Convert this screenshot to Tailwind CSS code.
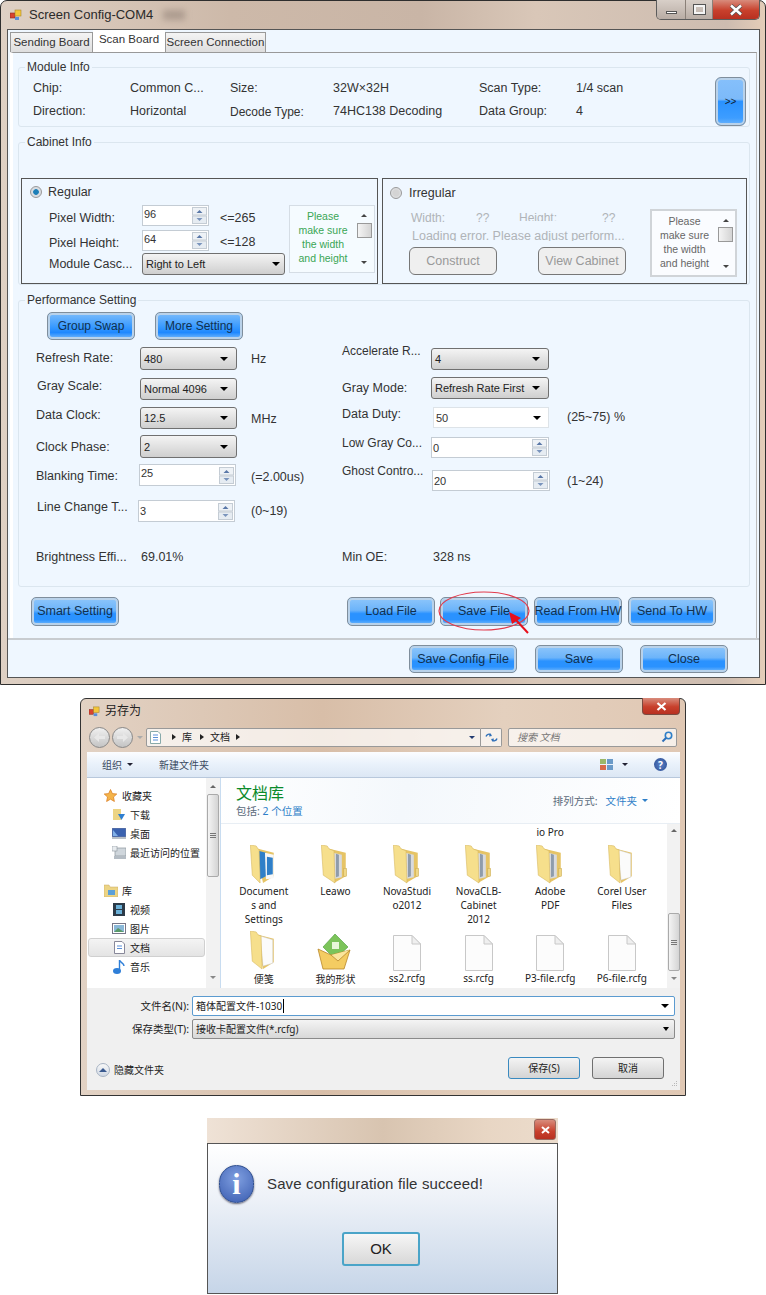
<!DOCTYPE html>
<html>
<head>
<meta charset="utf-8">
<title>Screen Config</title>
<script src="https://cdn.jsdelivr.net/npm/@tailwindcss/browser@4"></script>
</head>
<body class="bg-white">
<svg class="hidden">
  <symbol id="appicon" viewBox="0 0 12 12"><rect x="0" y="4" width="5" height="5" fill="#d9432f" stroke="#8a2a20" stroke-width=".6"/><rect x="5" y="1" width="6" height="6" fill="#f4c63a" stroke="#a8862a" stroke-width=".6"/><rect x="5" y="8" width="4" height="3" fill="#5b8fd8"/></symbol>
  <symbol id="folder" viewBox="0 0 28 40"><path d="M5 3 L25 8 V32 L13 39Z" fill="#e6c466"/><path d="M12 8 L21 10 V33 L12 35Z" fill="#d8dade"/><path d="M15 9 L18 10 V32 L15 33Z" fill="#8f9cab"/><path d="M0 0 L6 1 L8 4 L13 6 L14 39 L2 31Z" fill="#f6df8c" stroke="#d8b860" stroke-width=".6"/><rect x="23" y="24" width="3" height="8" fill="#f0d888" stroke="#c8a850" stroke-width=".5"/></symbol>
  <symbol id="paperfolder" viewBox="0 0 28 40"><path d="M5 3 L24 8 V32 L13 39Z" fill="#e6c466"/><path d="M10 5 L23 9 V33 L13 36Z" fill="#fbfbfb" stroke="#ccc" stroke-width=".5"/><path d="M0 0 L6 1 L8 4 L11 5 L12 39 L2 31Z" fill="#f6df8c" stroke="#d8b860" stroke-width=".6"/></symbol>
  <symbol id="docfile" viewBox="0 0 28 36"><path d="M.5 .5 H19 L27.5 9 V35.5 H.5Z" fill="#fcfcfc" stroke="#c8c8c8"/><path d="M19 .5 V9 H27.5Z" fill="#efefef" stroke="#c8c8c8"/></symbol>
  <symbol id="spinbtn" viewBox="0 0 15 17"><rect x=".5" y=".5" width="14" height="7.5" fill="#eef2f6" stroke="#c4ccd4"/><rect x=".5" y="9" width="14" height="7.5" fill="#e6ecf2" stroke="#c4ccd4"/><path d="M4.5 6 L7.5 3 L10.5 6Z" fill="#5a78a8"/><path d="M4.5 11 L7.5 14 L10.5 11Z" fill="#7a94bc"/></symbol>
</svg>

<div class="w-[766px] h-[1295px] overflow-hidden relative font-['Liberation_Sans',sans-serif] text-[12px] text-[#222]">

  <!-- config window -->
  <div class="w-[766px] h-[685px] border border-[#2e2e2e] rounded-t-[7px] px-[6px] bg-[linear-gradient(90deg,#ded0c4,#cdb9a9_30%,#c9b5a6_55%,#d9c7b8_70%,#cdbcb0_95%,#e4cdb8)]">
    <div class="h-[28px] flex items-start">
      <svg class="w-[12px] h-[12px] mt-[8px] ml-[3px]"><use href="#appicon"/></svg>
      <span class="ml-[7px] mt-[6px] text-[13px] leading-[16px] text-[#2a2a2a]">Screen Config-COM4</span>
      <span class="ml-[10px] mt-[9px] w-[22px] h-[10px] bg-[#8a7a70]/50 blur-[3px]"></span>
      <div class="ml-auto -mr-px -mt-px w-[104px] h-[20px] flex border border-t-0 border-[#5c5c5c] rounded-b-[5px] overflow-hidden">
        <div class="w-[29px] flex items-center justify-center bg-[linear-gradient(#d8cfc8,#b8aca4)] border-r border-[#8a8078]"><span class="w-[11px] h-[3px] mt-[6px] bg-white border border-[#555]"></span></div>
        <div class="w-[27px] flex items-center justify-center bg-[linear-gradient(#d8cfc8,#b8aca4)] border-r border-[#8a8078]"><span class="w-[11px] h-[9px] border-2 border-[#f4f4f4] outline outline-[#555]"></span></div>
        <div class="flex-1 flex items-center justify-center bg-[linear-gradient(#d88c7c,#c8402c_55%,#b83020)]"><svg class="w-[14px] h-[12px]" viewBox="0 0 14 12"><path d="M2 1.5 L12 10.5 M12 1.5 L2 10.5" stroke="#555" stroke-width="4"/><path d="M2 1.5 L12 10.5 M12 1.5 L2 10.5" stroke="#fff" stroke-width="2.4"/></svg></div>
      </div>
    </div>

    <div class="w-[753px] h-[649px] border border-[#555] bg-[#eff7ff]">
      <!-- tabs -->
      <div class="h-[22px] pt-px pl-[2px] flex items-end">
        <div class="w-[83px] h-[20px] flex items-center justify-center border border-b-0 border-[#999] bg-[linear-gradient(#f4f4f4,#dedede)] text-[#333] text-[11.5px]">Sending Board</div>
        <div class="w-[72px] h-[22px] flex items-center justify-center bg-white text-[#333] text-[11.5px] pb-[2px]">Scan Board</div>
        <div class="w-[101px] h-[20px] flex items-center justify-center border border-b-0 border-[#999] bg-[linear-gradient(#f4f4f4,#dedede)] text-[#333] text-[11.5px]">Screen Connection</div>
      </div>

      <div class="ml-[2px] w-[747px] h-[586px] border-t border-r border-l-[3px] border-t-[#999] border-r-[#bbb] border-l-white pl-[5px] pt-[7px]">
        <!-- module info -->
        <fieldset class="w-[732px] h-[67px] border border-[#dbe6ef] rounded-[3px] pl-[14px]">
          <legend class="-ml-[8px] px-[2px] h-[14px] leading-[14px] text-[#333]">Module Info</legend>
          <div class="flex pt-[3px]">
            <div class="w-[682px] grid grid-cols-[97px_100px_103px_146px_97px_1fr] auto-rows-[23px] items-center text-[12.5px] text-[#333]">
              <span>Chip:</span><span>Common C...</span><span>Size:</span><span>32W×32H</span><span>Scan Type:</span><span>1/4 scan</span>
              <span>Direction:</span><span>Horizontal</span><span class="text-[12px]">Decode Type:</span><span>74HC138 Decoding</span><span>Data Group:</span><span>4</span>
            </div>
            <div class="w-[31px] h-[49px] rounded-[6px] border border-[#7f8e9c] shadow-[inset_0_0_0_2px_#b9d2ea] bg-[linear-gradient(#86c0fb_0%,#7cbaf9_45%,#2a92ff_50%,#3d9dff_85%,#6cb4fb_100%)] flex items-center justify-center text-[10px] text-[#123]">&gt;&gt;</div>
          </div>
        </fieldset>

        <!-- cabinet info -->
        <fieldset class="mt-[8px] w-[732px] h-[150px] border border-[#dbe6ef] rounded-[3px] pl-[2px]">
          <legend class="ml-[4px] px-[2px] h-[14px] leading-[14px] text-[#333]">Cabinet Info</legend>
          <div class="mt-[29px] flex gap-[4px]">
            <!-- regular -->
            <div class="w-[357px] h-[106px] border border-[#555] flex">
              <div class="w-[267px] pl-[8px] pt-[6px]">
                <div class="h-[14px] flex items-center">
                  <span class="w-[12px] h-[12px] rounded-full border border-[#999] bg-[radial-gradient(#1d7fb8_35%,#d8dde2_45%)]"></span>
                  <span class="ml-[6px] text-[12.5px] text-[#333]">Regular</span>
                </div>
                <div class="mt-[6px] flex items-center h-[21px]">
                  <span class="w-[19px]"></span><span class="w-[93px] mt-[6px] text-[12.5px] text-[#333]">Pixel Width:</span>
                  <div class="w-[67px] h-[21px] border border-[#c4ccd4] bg-white flex items-center justify-between pl-px pr-px"><span class="self-start leading-[16px] text-[11px] text-[#333]">96</span><svg class="w-[15px] h-[17px]"><use href="#spinbtn"/></svg></div>
                  <span class="ml-[11px] mt-[6px] text-[12.5px] text-[#333]">&lt;=265</span>
                </div>
                <div class="mt-[4px] flex items-center h-[21px]">
                  <span class="w-[19px]"></span><span class="w-[93px] mt-[2px] text-[12.5px] text-[#333] h-[12px] leading-[14px] overflow-hidden">Pixel Height:</span>
                  <div class="w-[67px] h-[21px] border border-[#c4ccd4] bg-white flex items-center justify-between pl-px pr-px"><span class="self-start leading-[16px] text-[11px] text-[#333]">64</span><svg class="w-[15px] h-[17px]"><use href="#spinbtn"/></svg></div>
                  <span class="ml-[11px] mt-[4px] text-[12.5px] text-[#333]">&lt;=128</span>
                </div>
                <div class="mt-[2px] flex items-center h-[22px]">
                  <span class="w-[19px]"></span><span class="w-[93px] text-[12.5px] text-[#333]">Module Casc...</span>
                  <div class="w-[143px] h-[22px] border border-[#707070] rounded-[3px] bg-[linear-gradient(#f4f4f4,#cfcfcf)] flex items-center justify-between px-[3px] text-[11px] text-[#222]"><span>Right to Left</span><span class="border-x-[4px] border-t-[4px] border-x-transparent border-t-black mr-[1px]"></span></div>
                </div>
              </div>
              <div class="mt-[26px] w-[86px] h-[68px] border border-[#d5dde5] bg-[#f5fbff] flex overflow-hidden">
                <div class="flex-1 pt-[3px] text-center text-[10.5px] leading-[14px] text-[#3aa655]">Please<br>make sure<br>the width<br>and height</div>
                <div class="w-[16px] mr-[2px] flex flex-col items-center pt-[8px]">
                  <span class="border-x-[3px] border-b-[3px] border-x-transparent border-b-[#444]"></span>
                  <span class="mt-[6px] w-[15px] h-[15px] border border-[#999] bg-[linear-gradient(90deg,#f4f4f4,#d4d4d4)]"></span>
                  <span class="mt-[23px] border-x-[3px] border-t-[3px] border-x-transparent border-t-[#444]"></span>
                </div>
              </div>
            </div>
            <!-- irregular -->
            <div class="w-[365px] h-[106px] border border-[#555] flex">
              <div class="w-[267px] pl-[7px] pt-[7px] text-[#b0b4b8]">
                <div class="h-[14px] flex items-center">
                  <span class="w-[12px] h-[12px] rounded-full border border-[#999] bg-[radial-gradient(#d4d4d4_40%,#eceff2)]"></span>
                  <span class="ml-[7px] text-[12.5px] text-[#333]">Irregular</span>
                </div>
                <div class="mt-[9px] flex h-[14px] text-[12px]">
                  <span class="ml-[21px] w-[65px]">Width:</span><span class="w-[43px]">??</span><span class="w-[83px] h-[12px] overflow-hidden">Height:</span><span>??</span>
                </div>
                <div class="mt-[5px] ml-[22px] w-[260px] h-[13px] overflow-hidden whitespace-nowrap text-[12.5px] leading-[16px]">Loading error. Please adjust perform...</div>
                <div class="mt-[6px] ml-[19px] w-[217px] flex justify-between">
                  <div class="w-[88px] h-[28px] border border-[#777] rounded-[6px] bg-[#efefef] flex items-center justify-center text-[12.5px] text-[#999]">Construct</div>
                  <div class="w-[88px] h-[28px] border border-[#777] rounded-[6px] bg-[#efefef] flex items-center justify-center text-[12.5px] text-[#999]">View Cabinet</div>
                </div>
              </div>
              <div class="mt-[30px] w-[87px] h-[68px] border-2 border-[#d0d4d8] bg-[#fafcff] flex overflow-hidden">
                <div class="flex-1 pt-[3px] text-center text-[10.5px] leading-[14px] text-[#666]">Please<br>make sure<br>the width<br>and height</div>
                <div class="w-[17px] mr-[1px] flex flex-col items-center pt-[8px]">
                  <span class="border-x-[3px] border-b-[3px] border-x-transparent border-b-[#444]"></span>
                  <span class="mt-[5px] w-[15px] h-[15px] border border-[#999] bg-[linear-gradient(90deg,#f4f4f4,#d4d4d4)]"></span>
                  <span class="mt-[23px] border-x-[3px] border-t-[3px] border-x-transparent border-t-[#444]"></span>
                </div>
              </div>
            </div>
          </div>
        </fieldset>

        <!-- performance setting -->
        <fieldset class="mt-[8px] w-[732px] h-[294px] border border-[#dbe6ef] rounded-[3px]">
          <legend class="ml-[6px] px-[2px] h-[14px] leading-[14px] text-[#333]">Performance Setting</legend>
          <div class="mt-[5px] ml-[28px] flex gap-[20px]">
            <div class="w-[88px] h-[28px] rounded-[5px] border border-[#7f8e9c] shadow-[inset_0_0_0_2px_#b9d2ea] bg-[linear-gradient(#7cbcfb,#3c9cff_50%,#1e88ff_75%,#7cbcfb)] flex items-center justify-center text-[12px] text-[#10304f]">Group Swap</div>
            <div class="w-[88px] h-[28px] rounded-[5px] border border-[#7f8e9c] shadow-[inset_0_0_0_2px_#b9d2ea] bg-[linear-gradient(#7cbcfb,#3c9cff_50%,#1e88ff_75%,#7cbcfb)] flex items-center justify-center text-[12px] text-[#10304f]">More Setting</div>
          </div>
          <div class="flex pl-[17px] text-[12.5px] leading-[14px] text-[#333]">
            <!-- left column -->
            <div class="w-[306px] pt-[7px]">
              <div class="flex items-start h-[23px]">
                <span class="w-[104px] mt-[4px]">Refresh Rate:</span>
                <div class="w-[97px] h-[23px] border border-[#707070] rounded-[3px] bg-[linear-gradient(#f4f4f4,#cfcfcf)] flex items-center justify-between px-[3px] text-[11px] text-[#222]"><span>480</span><span class="border-x-[4px] border-t-[4px] border-x-transparent border-t-black mr-[5px]"></span></div>
                <span class="ml-[14px] mt-[5px]">Hz</span>
              </div>
              <div class="mt-[8px] flex items-start h-[22px]">
                <span class="w-[104px] mt-px pl-px">Gray Scale:</span>
                <div class="w-[97px] h-[22px] border border-[#707070] rounded-[3px] bg-[linear-gradient(#f4f4f4,#cfcfcf)] flex items-center justify-between px-[3px] text-[11px] text-[#222]"><span>Normal 4096</span><span class="border-x-[4px] border-t-[4px] border-x-transparent border-t-black mr-[5px]"></span></div>
              </div>
              <div class="mt-[7px] flex items-start h-[22px]">
                <span class="w-[104px] mt-px">Data Clock:</span>
                <div class="w-[97px] h-[22px] border border-[#707070] rounded-[3px] bg-[linear-gradient(#f4f4f4,#cfcfcf)] flex items-center justify-between px-[3px] text-[11px] text-[#222]"><span>12.5</span><span class="border-x-[4px] border-t-[4px] border-x-transparent border-t-black mr-[5px]"></span></div>
                <span class="ml-[14px] mt-[5px]">MHz</span>
              </div>
              <div class="mt-[6px] flex items-start h-[23px]">
                <span class="w-[104px] mt-[5px]">Clock Phase:</span>
                <div class="w-[97px] h-[23px] border border-[#707070] rounded-[3px] bg-[linear-gradient(#f4f4f4,#cfcfcf)] flex items-center justify-between px-[3px] text-[11px] text-[#222]"><span>2</span><span class="border-x-[4px] border-t-[4px] border-x-transparent border-t-black mr-[5px]"></span></div>
              </div>
              <div class="mt-[6px] flex items-start h-[22px]">
                <span class="w-[103px] mt-[5px]">Blanking Time:</span>
                <div class="w-[97px] h-[22px] border border-[#c4ccd4] bg-white flex items-center justify-between pl-px pr-px"><span class="self-start leading-[16px] text-[11px]">25</span><svg class="w-[15px] h-[17px]"><use href="#spinbtn"/></svg></div>
                <span class="ml-[15px] mt-[6px]">(=2.00us)</span>
              </div>
              <div class="mt-[14px] flex items-start h-[22px]">
                <span class="w-[102px] pl-px">Line Change T...</span>
                <div class="w-[97px] h-[22px] border border-[#c4ccd4] bg-white flex items-center justify-between pl-px pr-px"><span class="text-[11px]">3</span><svg class="w-[15px] h-[17px]"><use href="#spinbtn"/></svg></div>
                <span class="ml-[16px] mt-[4px]">(0~19)</span>
              </div>
              <div class="mt-[28px] flex h-[14px]">
                <span class="w-[105px]">Brightness Effi...</span><span>69.01%</span>
              </div>
            </div>
            <!-- right column -->
            <div class="flex-1 pt-[8px]">
              <div class="flex items-start h-[22px]">
                <span class="w-[89px] -mt-[4px] text-[12px]">Accelerate R...</span>
                <div class="w-[118px] h-[22px] border border-[#707070] rounded-[3px] bg-[linear-gradient(#f4f4f4,#cfcfcf)] flex items-center justify-between px-[3px] text-[11px] text-[#222]"><span>4</span><span class="border-x-[4px] border-t-[4px] border-x-transparent border-t-black mr-[5px]"></span></div>
              </div>
              <div class="mt-[7px] flex items-start h-[22px]">
                <span class="w-[89px] mt-[4px]">Gray Mode:</span>
                <div class="w-[118px] h-[22px] border border-[#707070] rounded-[3px] bg-[linear-gradient(#f4f4f4,#cfcfcf)] flex items-center justify-between px-[3px] text-[11px] text-[#222]"><span>Refresh Rate First</span><span class="border-x-[4px] border-t-[4px] border-x-transparent border-t-black mr-[5px]"></span></div>
              </div>
              <div class="mt-[8px] flex items-start h-[21px]">
                <span class="w-[91px]">Data Duty:</span>
                <div class="w-[116px] h-[21px] border border-[#dde3e8] bg-white flex items-center justify-between px-[2px] text-[11px]"><span>50</span><span class="border-x-[4px] border-t-[4px] border-x-transparent border-t-black mr-[5px]"></span></div>
                <span class="ml-[18px] mt-[3px]">(25~75) %</span>
              </div>
              <div class="mt-[9px] flex items-start h-[21px]">
                <span class="w-[89px] -mt-px text-[12px]">Low Gray Co...</span>
                <div class="w-[118px] h-[21px] border border-[#c4ccd4] bg-white flex items-center justify-between pl-px pr-px"><span class="text-[11px]">0</span><svg class="w-[15px] h-[17px]"><use href="#spinbtn"/></svg></div>
              </div>
              <div class="mt-[12px] flex items-start h-[21px]">
                <span class="w-[90px] -mt-[6px] text-[12px]">Ghost Contro...</span>
                <div class="w-[118px] h-[21px] border border-[#c4ccd4] bg-white flex items-center justify-between pl-px pr-px"><span class="text-[11px]">20</span><svg class="w-[15px] h-[17px]"><use href="#spinbtn"/></svg></div>
                <span class="ml-[17px] mt-[4px]">(1~24)</span>
              </div>
              <div class="mt-[59px] flex h-[14px]">
                <span class="w-[91px]">Min OE:</span><span>328 ns</span>
              </div>
            </div>
          </div>
        </fieldset>

        <!-- file buttons -->
        <div class="mt-[10px] flex pl-[13px]">
          <div class="w-[88px] h-[29px] rounded-[5px] border border-[#7f8e9c] shadow-[inset_0_0_0_2px_#b9d2ea] bg-[linear-gradient(#8ec6fb_0%,#6cb4fa_45%,#2a92ff_58%,#2a92ff_80%,#7abcfb_100%)] flex items-center justify-center text-[12.5px] text-[#10304f]">Smart Setting</div>
          <div class="ml-[228px] w-[88px] h-[29px] rounded-[5px] border border-[#7f8e9c] shadow-[inset_0_0_0_2px_#b9d2ea] bg-[linear-gradient(#8ec6fb_0%,#6cb4fa_45%,#2a92ff_58%,#2a92ff_80%,#7abcfb_100%)] flex items-center justify-center text-[12.5px] text-[#10304f]">Load File</div>
          <div class="ml-[5px] w-[88px] h-[29px] rounded-[5px] border border-[#7f8e9c] shadow-[inset_0_0_0_2px_#b9d2ea] bg-[linear-gradient(#8ec6fb_0%,#6cb4fa_45%,#2a92ff_58%,#2a92ff_80%,#7abcfb_100%)] flex items-center justify-center text-[12.5px] text-[#10304f]">Save File</div>
          <div class="ml-[6px] w-[88px] h-[29px] rounded-[5px] border border-[#7f8e9c] shadow-[inset_0_0_0_2px_#b9d2ea] bg-[linear-gradient(#8ec6fb_0%,#6cb4fa_45%,#2a92ff_58%,#2a92ff_80%,#7abcfb_100%)] flex items-center justify-center text-[12.5px] text-[#10304f] whitespace-nowrap">Read From HW</div>
          <div class="ml-[6px] w-[88px] h-[29px] rounded-[5px] border border-[#7f8e9c] shadow-[inset_0_0_0_2px_#b9d2ea] bg-[linear-gradient(#8ec6fb_0%,#6cb4fa_45%,#2a92ff_58%,#2a92ff_80%,#7abcfb_100%)] flex items-center justify-center text-[12.5px] text-[#10304f]">Send To HW</div>
        </div>
      </div>

      <!-- bottom bar -->
      <div class="h-[39px] border-t-2 border-[#c8ccd0] pt-[5px] pl-[401px] flex">
        <div class="w-[108px] h-[28px] rounded-[5px] border border-[#7f8e9c] shadow-[inset_0_0_0_2px_#b9d2ea] bg-[linear-gradient(#8ec6fb_0%,#6cb4fa_45%,#2a92ff_58%,#2a92ff_80%,#7abcfb_100%)] flex items-center justify-center text-[12.5px] text-[#10304f]">Save Config File</div>
        <div class="ml-[18px] w-[88px] h-[28px] rounded-[5px] border border-[#7f8e9c] shadow-[inset_0_0_0_2px_#b9d2ea] bg-[linear-gradient(#8ec6fb_0%,#6cb4fa_45%,#2a92ff_58%,#2a92ff_80%,#7abcfb_100%)] flex items-center justify-center text-[12.5px] text-[#10304f]">Save</div>
        <div class="ml-[17px] w-[88px] h-[28px] rounded-[5px] border border-[#7f8e9c] shadow-[inset_0_0_0_2px_#b9d2ea] bg-[linear-gradient(#8ec6fb_0%,#6cb4fa_45%,#2a92ff_58%,#2a92ff_80%,#7abcfb_100%)] flex items-center justify-center text-[12.5px] text-[#10304f]">Close</div>
      </div>
    </div>
  </div>

  <!-- red annotation over Save File -->
  <svg class="absolute left-[436px] top-[588px] w-[100px] h-[48px]" viewBox="0 0 100 48" fill="none">
    <ellipse cx="48" cy="23" rx="45" ry="19" stroke="#e23a4c" stroke-width="1.2"/>
    <path d="M92 45 L80 32" stroke="#e8101c" stroke-width="2"/>
    <path d="M73 24 L85 30 L76 36Z" fill="#e8101c"/>
  </svg>

  <!-- save as dialog -->
  <div class="mt-[13px] ml-[80px] w-[606px] h-[398px] border border-[#333] rounded-t-[6px] px-[6px] bg-[linear-gradient(90deg,#e2d2c4,#d8bea8_40%,#e4d0be_70%,#e0c8b4)] font-['Noto_Sans','Noto_Sans_CJK_SC',sans-serif] text-[10px] leading-[14px] text-[#222]">
    <div class="h-[28px] flex items-start">
      <svg class="w-[11px] h-[11px] mt-[7px] ml-[2px]"><use href="#appicon"/></svg>
      <span class="ml-[5px] mt-[4px] text-[12px] leading-[16px]">另存为</span>
      <div class="ml-auto -mr-px -mt-px w-[38px] h-[17px] border border-t-0 border-[#7a4a40] rounded-b-[4px] flex items-center justify-center bg-[linear-gradient(#d88c7c,#c8402c_55%,#b83020)]"><svg class="w-[11px] h-[9px]" viewBox="0 0 11 9"><path d="M1.5 1 L9.5 8 M9.5 1 L1.5 8" stroke="#fff" stroke-width="2.2"/></svg></div>
    </div>
    <div class="h-[20px] flex items-center pl-[2px]">
      <span class="w-[21px] h-[21px] rounded-full border border-[#888] bg-[linear-gradient(#f0f0f0,#c4c4c4)] flex items-center justify-center"><svg class="w-[11px] h-[9px]" viewBox="0 0 11 9"><path d="M0 4.5 L5 0 V3 H11 V6 H5 V9Z" fill="#e8e8e8"/></svg></span>
      <span class="ml-[2px] w-[21px] h-[21px] rounded-full border border-[#888] bg-[linear-gradient(#f0f0f0,#c4c4c4)] flex items-center justify-center"><svg class="w-[11px] h-[9px]" viewBox="0 0 11 9"><path d="M11 4.5 L6 0 V3 H0 V6 H6 V9Z" fill="#e8e8e8"/></svg></span>
      <span class="ml-[4px] border-x-[3px] border-t-[3px] border-x-transparent border-t-[#aaa]"></span>
      <div class="ml-[3px] w-[335px] h-[19px] border border-[#999] rounded-l-[2px] bg-white/70 flex items-center pl-[3px]">
        <svg class="w-[11px] h-[13px]" viewBox="0 0 11 13"><path d="M.5 .5 H8 L10.5 3 V12.5 H.5Z" fill="#fff" stroke="#8aa"/><path d="M3 4 H8 M3 6.5 H8 M3 9 H8" stroke="#5b8fd8"/></svg>
        <span class="ml-[11px] border-y-[3px] border-l-[4px] border-y-transparent border-l-[#222]"></span>
        <span class="ml-[6px]">库</span>
        <span class="ml-[8px] border-y-[3px] border-l-[4px] border-y-transparent border-l-[#222]"></span>
        <span class="ml-[6px]">文档</span>
        <span class="ml-[6px] border-y-[3px] border-l-[4px] border-y-transparent border-l-[#222]"></span>
        <span class="ml-auto mr-[5px] border-x-[3px] border-t-[3px] border-x-transparent border-t-[#223a70]"></span>
      </div>
      <div class="w-[21px] h-[19px] border border-l-0 border-[#999] rounded-r-[2px] bg-white/70 flex items-center justify-center"><svg class="w-[13px] h-[11px]" viewBox="0 0 13 11" fill="none"><path d="M1 4.5 A3 3 0 0 1 6 3 M12 6.5 A3 3 0 0 1 7 8" stroke="#2f6fb8" stroke-width="1.3"/><path d="M5 1 L7 4 L4 4.5Z M8 10 L6 7 L9 6.5Z" fill="#2f6fb8"/></svg></div>
      <div class="ml-[6px] w-[169px] h-[19px] border border-[#999] rounded-[2px] bg-white/70 flex items-center justify-between pl-[8px] pr-[3px] text-[#777] italic"><span>搜索 文档</span><svg class="w-[12px] h-[12px]" viewBox="0 0 12 12" fill="none"><circle cx="7.5" cy="4.5" r="3.2" stroke="#2f7fc8" stroke-width="1.6"/><path d="M5 7 L1.5 10.5" stroke="#2f6fb8" stroke-width="2"/></svg></div>
    </div>
    <div class="mt-[5px] w-[593px] h-[338px] bg-white">
      <!-- toolbar -->
      <div class="h-[26px] flex items-center bg-[linear-gradient(#fcfdff,#eaf2fb_45%,#dce7f4)] border-b border-[#b8c8dc] text-[#3a4a60] pl-[15px]">
        <span>组织</span>
        <span class="ml-[5px] border-x-[3px] border-t-[3px] border-x-transparent border-t-[#223]"></span>
        <span class="ml-[26px]">新建文件夹</span>
        <svg class="ml-auto w-[13px] h-[11px]" viewBox="0 0 13 11"><rect width="6" height="5" fill="#9bb86a"/><rect x="7" width="6" height="5" fill="#6a9ac8"/><rect y="6" width="6" height="5" fill="#d86a4a"/><rect x="7" y="6" width="6" height="5" fill="#6a9ac8"/></svg>
        <span class="ml-[9px] border-x-[3px] border-t-[3px] border-x-transparent border-t-[#223]"></span>
        <span class="ml-[26px] mr-[13px] w-[13px] h-[13px] rounded-full bg-[radial-gradient(#5a82c8,#2a4a90)] flex items-center justify-center text-white text-[10px] font-bold">?</span>
      </div>
      <!-- content -->
      <div class="h-[210px] flex">
        <div class="w-[119px] pt-[8px]">
          <div class="h-[19px] flex items-center pl-[17px]"><svg class="w-[13px] h-[13px]" viewBox="0 0 13 13"><path d="M6.5 .5 L8.4 4.6 L12.8 5 L9.5 8 L10.4 12.5 L6.5 10.2 L2.6 12.5 L3.5 8 L.2 5 L4.6 4.6Z" fill="#f4b44a" stroke="#d8781c" stroke-width=".7"/></svg><span class="ml-[5px]">收藏夹</span></div>
          <div class="h-[19px] flex items-center pl-[26px]"><svg class="w-[13px] h-[13px]" viewBox="0 0 13 13"><rect x="0" y="1" width="8" height="11" fill="#ecd484"/><path d="M5 6 H12 L8.5 12Z" fill="#2f7fd0"/></svg><span class="ml-[4px]">下载</span></div>
          <div class="h-[19px] flex items-center pl-[25px]"><svg class="w-[14px] h-[11px]" viewBox="0 0 14 11"><rect width="14" height="9" fill="#3a62b0" stroke="#889" stroke-width=".6"/><path d="M0 9 H14 V11 H0Z" fill="#b8c0c8"/><path d="M1 2 L6 8 H1Z" fill="#80b0e8"/></svg><span class="ml-[4px]">桌面</span></div>
          <div class="h-[19px] flex items-center pl-[25px] whitespace-nowrap"><svg class="w-[14px] h-[13px]" viewBox="0 0 14 13"><rect x="3" y="2" width="11" height="8" fill="#cfd6dc" stroke="#8a949c" stroke-width=".7"/><rect x="0" y="0" width="5" height="5" fill="#e8ecef" stroke="#8a949c" stroke-width=".6"/><rect x="2" y="10" width="12" height="3" fill="#b4bcc4"/></svg><span class="ml-[4px]">最近访问的位置</span></div>
          <div class="h-[19px]"></div>
          <div class="h-[19px] flex items-center pl-[17px]"><svg class="w-[14px] h-[13px]" viewBox="0 0 14 13"><path d="M0 1 H5 L6 3 H14 V13 H0Z" fill="#ecd484" stroke="#c8a860" stroke-width=".5"/><rect x="4" y="6" width="7" height="5" fill="#5ba0d8"/></svg><span class="ml-[4px]">库</span></div>
          <div class="h-[19px] flex items-center pl-[26px]"><svg class="w-[12px] h-[13px]" viewBox="0 0 12 13"><rect width="12" height="13" fill="#2c3a48"/><rect x="3" y="2" width="6" height="4" fill="#6ab0d8"/><rect x="3" y="7" width="6" height="4" fill="#6ab0d8"/></svg><span class="ml-[5px]">视频</span></div>
          <div class="h-[19px] flex items-center pl-[25px]"><svg class="w-[14px] h-[11px]" viewBox="0 0 14 11"><rect x=".5" y=".5" width="13" height="10" fill="#fff" stroke="#778"/><rect x="2" y="2" width="10" height="7" fill="#8ab8d8"/><path d="M2 9 L6 5 L12 9Z" fill="#5a9a6a"/></svg><span class="ml-[4px]">图片</span></div>
          <div class="h-[19px] flex items-center pl-[26px] ml-px w-[117px] rounded-[3px] border border-[#d0d0d0] bg-[linear-gradient(#f4f4f4,#e4e4e4)]"><svg class="w-[11px] h-[13px] -ml-[1px]" viewBox="0 0 11 13"><path d="M.5 .5 H8 L10.5 3 V12.5 H.5Z" fill="#fff" stroke="#889"/><path d="M3 5 H8 M3 7.5 H8" stroke="#5b8fd8"/></svg><span class="ml-[5px]">文档</span></div>
          <div class="h-[19px] flex items-center pl-[26px]"><svg class="w-[12px] h-[14px]" viewBox="0 0 12 14"><ellipse cx="4" cy="11" rx="4" ry="3" fill="#2f7fd8"/><path d="M6.5 11 V0 C7.5 3 11 3 11 6" stroke="#2f7fd8" stroke-width="1.4" fill="none"/></svg><span class="ml-[5px]">音乐</span></div>
        </div>
        <!-- side scrollbar -->
        <div class="w-[14px] bg-[#f2f2f2] flex flex-col items-center pt-[7px]">
          <span class="border-x-[3px] border-b-[3px] border-x-transparent border-b-[#666]"></span>
          <span class="mt-[6px] w-[12px] h-[83px] rounded-[2px] border border-[#aaa] bg-[linear-gradient(90deg,#f4f4f4,#d4d4d4)] flex flex-col items-center justify-center gap-px"><i class="w-[6px] h-px bg-[#777]"></i><i class="w-[6px] h-px bg-[#777]"></i><i class="w-[6px] h-px bg-[#777]"></i></span>
          <span class="mt-[99px] border-x-[3px] border-t-[3px] border-x-transparent border-t-[#888]"></span>
        </div>
        <div class="w-px bg-[#c8dcf0]"></div>
        <!-- main pane -->
        <div class="flex-1 flex flex-col">
          <div class="h-[46px] border-b border-[#e8eef4] flex justify-between bg-[linear-gradient(100deg,#fff,#f4f8fc_40%,#fff)]">
            <div class="pl-[15px] pt-[6px]">
              <div class="text-[16px] leading-[18px] text-[#0a8a2a]">文档库</div>
              <div class="mt-[2px] text-[10.5px] leading-[14px] text-[#5a6a7a]">包括: <span class="text-[#2f7fc8]">2 个位置</span></div>
            </div>
            <div class="pt-[16px] pr-[32px] flex items-start text-[10.5px] text-[#5a6a7a]">
              <span>排列方式:</span><span class="ml-[8px] text-[#2f7fc8]">文件夹</span><span class="ml-[5px] mt-[5px] border-x-[3px] border-t-[3px] border-x-transparent border-t-[#2f7fc8]"></span>
            </div>
          </div>
          <div class="flex-1 flex">
            <div class="w-[446px] pl-[7px] pt-px">
              <div class="grid grid-cols-[repeat(6,71.6px)] grid-rows-[14px_89px_60px] text-center">
                <span class="col-start-5">io Pro</span>
                <div class="col-start-1 row-start-2 flex flex-col items-center pt-[6px]">
                  <svg class="w-[28px] h-[39px]" viewBox="0 0 28 40"><path d="M5 3 L24 8 V32 L13 39Z" fill="#e6c466"/><path d="M8 6 L16 8 V32 L10 35Z" fill="#2f7fc8"/><path d="M15 8 L24 10 V34 L16 35Z" fill="#f8f8f8"/><path d="M17 12 L23 13 V30 L17 31Z" fill="#2f7fc8"/><path d="M0 0 L6 1 L8 4 L9 5 L10 39 L2 31Z" fill="#f6df8c" stroke="#d8b860" stroke-width=".6"/></svg>
                  <span>Document<br>s and<br>Settings</span>
                </div>
                <div class="col-start-2 row-start-2 flex flex-col items-center pt-[6px]"><svg class="w-[28px] h-[39px]"><use href="#folder"/></svg><span>Leawo</span></div>
                <div class="col-start-3 row-start-2 flex flex-col items-center pt-[6px]"><svg class="w-[28px] h-[39px]"><use href="#folder"/></svg><span>NovaStudi<br>o2012</span></div>
                <div class="col-start-4 row-start-2 flex flex-col items-center pt-[6px]"><svg class="w-[28px] h-[39px]"><use href="#folder"/></svg><span>NovaCLB-<br>Cabinet<br>2012</span></div>
                <div class="col-start-5 row-start-2 flex flex-col items-center pt-[6px]"><svg class="w-[28px] h-[39px]"><use href="#folder"/></svg><span>Adobe<br>PDF</span></div>
                <div class="col-start-6 row-start-2 flex flex-col items-center pt-[6px]"><svg class="w-[28px] h-[39px]"><use href="#paperfolder"/></svg><span>Corel User<br>Files</span></div>
                <div class="col-start-1 row-start-3 flex flex-col items-center pt-[6px]"><svg class="w-[28px] h-[39px] -mt-[3px]"><use href="#paperfolder"/></svg><span class="mt-[2px]">便笺</span></div>
                <div class="col-start-2 row-start-3 flex flex-col items-center pt-[6px]"><svg class="w-[36px] h-[37px]" viewBox="0 0 36 37"><path d="M18 0 L31 13 L18 25 L6 13Z" fill="#7cc45a" stroke="#4a9a3a" stroke-width=".6"/><path d="M15 8 H22 V15 H15Z" fill="#e8f8d8"/><path d="M1 15 L14 21 L33 16 L27 35 H6Z" fill="#f4cc62" stroke="#b8862a" stroke-width=".8"/><path d="M14 21 L21 27 L33 16" stroke="#b8862a" stroke-width=".8" fill="#fbe59c"/></svg><span class="mt-[1px] whitespace-nowrap">我的形状</span></div>
                <div class="col-start-3 row-start-3 flex flex-col items-center pt-[7px]"><svg class="w-[28px] h-[36px]"><use href="#docfile"/></svg><span>ss2.rcfg</span></div>
                <div class="col-start-4 row-start-3 flex flex-col items-center pt-[7px]"><svg class="w-[28px] h-[36px]"><use href="#docfile"/></svg><span>ss.rcfg</span></div>
                <div class="col-start-5 row-start-3 flex flex-col items-center pt-[7px]"><svg class="w-[28px] h-[36px]"><use href="#docfile"/></svg><span>P3-file.rcfg</span></div>
                <div class="col-start-6 row-start-3 flex flex-col items-center pt-[7px]"><svg class="w-[28px] h-[36px]"><use href="#docfile"/></svg><span>P6-file.rcfg</span></div>
              </div>
            </div>
            <div class="w-[13px] bg-[#f2f2f2] flex flex-col items-center pt-[5px]">
              <span class="border-x-[3px] border-b-[3px] border-x-transparent border-b-[#666]"></span>
              <span class="mt-[81px] w-[12px] h-[58px] rounded-[2px] border border-[#aaa] bg-[linear-gradient(90deg,#f4f4f4,#d4d4d4)] flex flex-col items-center justify-center gap-px"><i class="w-[6px] h-px bg-[#777]"></i><i class="w-[6px] h-px bg-[#777]"></i><i class="w-[6px] h-px bg-[#777]"></i></span>
              <span class="mt-[6px] border-x-[3px] border-t-[3px] border-x-transparent border-t-[#888]"></span>
            </div>
          </div>
        </div>
      </div>
      <!-- file form -->
      <div class="h-[102px] bg-[#f0f0f0] pt-[8px] relative">
        <div class="flex h-[20px] items-center">
          <span class="w-[102px] text-right text-[10.5px]">文件名(N):</span>
          <div class="ml-[3px] w-[483px] h-[20px] border border-[#5b9bd0] rounded-[2px] bg-white flex items-center justify-between pl-[3px] pr-[5px]"><span class="border-r border-black pr-px">箱体配置文件-1030</span><span class="border-x-[4px] border-t-[4px] border-x-transparent border-t-black"></span></div>
        </div>
        <div class="mt-[3px] flex h-[20px] items-center">
          <span class="w-[102px] text-right text-[10.5px]">保存类型(T):</span>
          <div class="ml-[3px] w-[483px] h-[20px] border border-[#8a8a8a] rounded-[2px] bg-[linear-gradient(#f4f4f4,#d8d8d8)] flex items-center justify-between pl-[3px] pr-[5px]"><span>接收卡配置文件(*.rcfg)</span><span class="border-x-[3px] border-t-[4px] border-x-transparent border-t-black"></span></div>
        </div>
        <div class="mt-[18px] flex items-center pl-[9px]">
          <span class="mt-[4px] w-[14px] h-[14px] rounded-full border border-[#a8b4c4] bg-[linear-gradient(#f8f8f8,#d0d8e4)] flex items-center justify-center"><span class="border-x-[4px] border-b-[4px] border-x-transparent border-b-[#3a5a90]"></span></span>
          <span class="ml-[4px] mt-[4px]">隐藏文件夹</span>
          <div class="ml-[344px] w-[72px] h-[22px] border border-[#3a8ac0] rounded-[3px] bg-[linear-gradient(#f4f4f4,#d4d4d4)] flex items-center justify-center">保存(S)</div>
          <div class="ml-[12px] w-[72px] h-[22px] border border-[#707070] rounded-[3px] bg-[linear-gradient(#f4f4f4,#d4d4d4)] flex items-center justify-center">取消</div>
        </div>
        <svg class="absolute right-[2px] bottom-[2px] w-[7px] h-[7px]" viewBox="0 0 7 7"><path d="M5 0h1v1h-1z M3 2h1v1h-1z M5 2h1v1h-1z M1 4h1v1h-1z M3 4h1v1h-1z M5 4h1v1h-1z" fill="#b8b8b8"/></svg>
      </div>
    </div>
  </div>

  <!-- result dialog -->
  <div class="mt-[22px] ml-[207px] w-[351px] h-[176px] flex flex-col">
    <div class="h-[25px] flex justify-end items-start pr-[2px] pt-px bg-[linear-gradient(90deg,#efe2d6,#d8c4b0_50%,#e8d6c4_80%,#ecdccc)]">
      <div class="w-[22px] h-[21px] border border-[#9a6a60] rounded-[3px] flex items-center justify-center bg-[linear-gradient(#d88c7c,#c8402c_60%,#b83020)]"><svg class="w-[9px] h-[8px]" viewBox="0 0 9 8"><path d="M1 1 L8 7 M8 1 L1 7" stroke="#fff" stroke-width="2"/></svg></div>
    </div>
    <div class="flex-1 border border-[#555] bg-[linear-gradient(#fff,#eef2f8_35%,#c6d5e8)]">
      <div class="flex items-center pl-[11px] pt-[21px]">
        <span class="w-[35px] h-[38px] rounded-full border border-[#2f4f90] bg-[radial-gradient(circle_at_50%_35%,#7f9fe0,#3a5cb0)] shadow-[0_1px_2px_#667] flex items-center justify-center font-['Liberation_Serif',serif] font-bold text-[30px] leading-none text-white">i</span>
        <span class="ml-[13px] text-[15px] tracking-[0.13px] text-[#333]">Save configuration file succeed!</span>
      </div>
      <div class="mt-[29px] ml-[134px] w-[78px] h-[34px] rounded-[3px] border-2 border-[#4aa4c8] bg-[linear-gradient(#f6f6f6,#d8d8d8)] flex items-center justify-center text-[15px] text-[#222]">OK</div>
    </div>
  </div>
</div>
</body>
</html>
